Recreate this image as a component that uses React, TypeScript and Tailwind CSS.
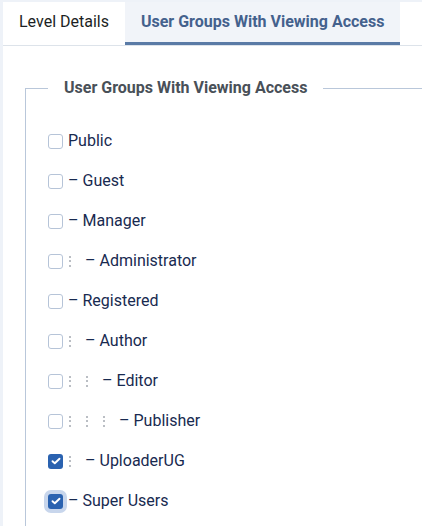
import React from "react";

type Item = { name: string; level: number; dash: boolean; checked?: boolean; focus?: boolean };

const items: Item[] = [
  { name: "Public", level: 0, dash: false },
  { name: "Guest", level: 0, dash: true },
  { name: "Manager", level: 0, dash: true },
  { name: "Administrator", level: 1, dash: true },
  { name: "Registered", level: 0, dash: true },
  { name: "Author", level: 1, dash: true },
  { name: "Editor", level: 2, dash: true },
  { name: "Publisher", level: 3, dash: true },
  { name: "UploaderUG", level: 1, dash: true, checked: true },
  { name: "Super Users", level: 0, dash: true, checked: true, focus: true },
];

function Dots() {
  return (
    <span className="w-[17px] shrink-0 flex items-center">
      <span className="ml-[1px] flex flex-col gap-[2.5px]">
        <span className="block w-[2px] h-[2px] rounded-full bg-[#a3a9b1]" />
        <span className="block w-[2px] h-[2px] rounded-full bg-[#a3a9b1]" />
        <span className="block w-[2px] h-[2px] rounded-full bg-[#a3a9b1]" />
      </span>
    </span>
  );
}

function Box({ checked, focus }: { checked?: boolean; focus?: boolean }) {
  if (checked) {
    return (
      <span
        className={
          "w-[15px] h-[15px] shrink-0 rounded-[3px] bg-[#2a62b0] flex items-center justify-center " +
          (focus ? "shadow-[0_0_0_4px_#c8d6ec]" : "")
        }
      >
        <svg width="10" height="8" viewBox="0 0 10 8">
          <path d="M1.5 4.2 L3.8 6.3 L8.5 1.7" fill="none" stroke="#fff" strokeWidth="1.9" strokeLinecap="round" strokeLinejoin="round" />
        </svg>
      </span>
    );
  }
  return <span className="w-[15px] h-[15px] shrink-0 rounded-[3px] border border-[#b6c4d8] bg-white" />;
}

export default function App() {
  return (
    <div
      className="w-[422px] h-[526px] overflow-hidden bg-[#eef2f8] pl-[3px] pt-[2px]"
      style={{ fontFamily: "Roboto, 'Liberation Sans', sans-serif" }}
    >
      <div className="h-full bg-white flex flex-col">
        <div className="flex border-b border-[#dde3ea] bg-white">
          <div className="px-4 py-2 leading-6 text-[16px] text-[#1c1f24] border-b-[3px] border-transparent">
            Level Details
          </div>
          <div className="px-4 py-2 leading-6 text-[16px] font-bold text-[#44618d] bg-[#f1f4f9] border-b-[3px] border-[#5a7ba6]">
            User Groups With Viewing Access
          </div>
        </div>
        <div className="pl-[22px] pt-[30px] flex-1">
          <fieldset className="w-[420px] h-[600px] border border-[#b9c7da] pl-[22px] pt-[21px]">
            <legend className="px-4 leading-6 text-[16px] font-bold text-[#495058]">
              User Groups With Viewing Access
            </legend>
            <div className="flex flex-col">
              {items.map((it) => (
                <div key={it.name} className="h-[40px] flex items-center text-[16px] text-[#182a50]">
                  <Box checked={it.checked} focus={it.focus} />
                  <span className="w-[5px] shrink-0" />
                  {Array.from({ length: it.level }).map((_, i) => (
                    <Dots key={i} />
                  ))}
                  {it.dash && <span className="mr-[4px]">–</span>}
                  <span>{it.name}</span>
                </div>
              ))}
            </div>
          </fieldset>
        </div>
      </div>
    </div>
  );
}
